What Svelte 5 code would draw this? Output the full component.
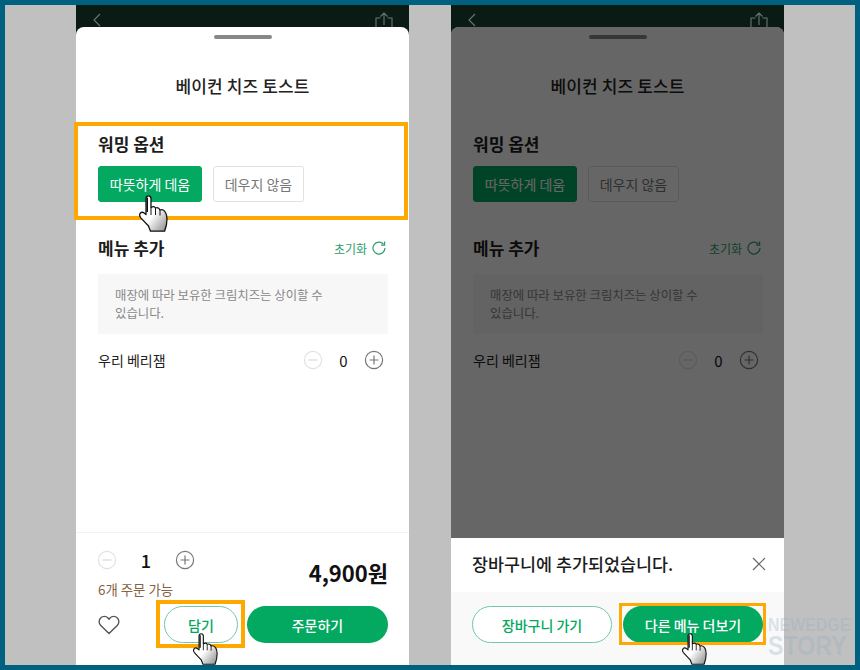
<script>
  const teal = 'teal';
</script>

{#snippet minus()}
  <svg class="circ" viewBox="0 0 20 20"><circle cx="10" cy="10" r="8.6" fill="none" stroke="#e2e2e2" stroke-width="1.2"/><path d="M5.5 10h9" stroke="#d8d8d8" stroke-width="1.2"/></svg>
{/snippet}
{#snippet plus()}
  <svg class="circ" viewBox="0 0 20 20"><circle cx="10" cy="10" r="8.6" fill="none" stroke="#777" stroke-width="1.2"/><path d="M5.5 10h9M10 5.5v9" stroke="#777" stroke-width="1.2"/></svg>
{/snippet}
{#snippet hand(cls)}
  <svg class="hand {cls}" viewBox="0 0 29 37">
    <defs><linearGradient id="hg-{cls}" x1="0.1" y1="0.25" x2="0.85" y2="1"><stop offset="0.45" stop-color="#fff"/><stop offset="1" stop-color="#9a9a9a"/></linearGradient></defs>
    <path d="M7 3.5Q7 .8 9.4 .8T12 3.5V12.5Q15 10.6 16.5 13Q19.5 11.8 21 15Q24.5 13.8 26.5 17.5Q28 20 28 24L27.4 30 25.6 36.2H11.5L9.5 31 1.6 22.6Q0 20.2 1 18.6 2.6 16.2 5.2 18L7 19.6Z" fill="url(#hg-{cls})" stroke="#111" stroke-width="1.3" stroke-linejoin="round"/>
    <path d="M12 12.5V20M16.5 13V20M21 15V20.5" stroke="#111" stroke-width="1" fill="none"/>
    <path d="M8.2 2.5V17" stroke="#111" stroke-width="1.6"/>
  </svg>
{/snippet}
{#snippet topbar()}
  <div class="topbar">
    <svg class="back" viewBox="0 0 8 14"><path d="M7 1 1 7l6 6" fill="none" stroke="#6e7672" stroke-width="1.1"/></svg>
    <svg class="share" viewBox="0 0 18 18"><path d="M5.5 6H1v12M12.5 6H17v12M9 13V1M5.5 4.5 9 1l3.5 3.5" fill="none" stroke="#6e7672" stroke-width="1.1"/></svg>
  </div>
{/snippet}
{#snippet content()}
  <div class="grip"></div>
  <h1>베이컨 치즈 토스트</h1>
  <div class="pad">
    <h2>워밍 옵션</h2>
    <div class="opts">
      <span class="opt on">따뜻하게 데움</span>
      <span class="opt">데우지 않음</span>
    </div>
    <div class="menuhead">
      <h2>메뉴 추가</h2>
      <span class="reset">초기화
        <svg viewBox="0 0 14 14"><path d="M11.6 3.2A6 6 0 1 0 13 7" fill="none" stroke="#2e9e6c" stroke-width="1.2"/><path d="M12.6 .6v3.6H9" fill="none" stroke="#2e9e6c" stroke-width="1.2"/></svg>
      </span>
    </div>
    <p class="info">매장에 따라 보유한 크림치즈는 상이할 수<br>있습니다.</p>
    <div class="row">
      <span>우리 베리잼</span>
      <div class="stepper small">
        {@render minus()}
        <b>0</b>
        {@render plus()}
      </div>
    </div>
  </div>
{/snippet}

<div class="frame">
  <section class="phone">
    {@render topbar()}
    <div class="sheet">
      {@render content()}
      <div class="foot">
        <div class="qty">
          <div>
            <div class="stepper big">
              {@render minus()}
              <b>1</b>
              {@render plus()}
            </div>
            <div class="avail">6개 주문 가능</div>
          </div>
          <div class="price">4,900원</div>
        </div>
        <div class="actions">
          <svg class="heart" viewBox="0 0 22 20"><path d="M11 18.6 2.8 10.4A5.2 5.2 0 0 1 2.6 3 5.1 5.1 0 0 1 10 3L11 4.2 12 3A5.1 5.1 0 0 1 19.4 3 5.2 5.2 0 0 1 19.2 10.4Z" fill="none" stroke="#555" stroke-width="1.4" stroke-linejoin="round"/></svg>
          <span class="btn ghost add">담기</span>
          <span class="btn solid order">주문하기</span>
        </div>
      </div>
    </div>
    <div class="mark m1"></div>
    <div class="mark m2"></div>
    {@render hand('h1')}
    {@render hand('h2')}
  </section>

  <section class="phone">
    {@render topbar()}
    <div class="sheet">
      {@render content()}
    </div>
    <div class="dim"></div>
    <div class="toast">
      <div class="toasthead">
        <strong>장바구니에 추가되었습니다.</strong>
        <svg class="close" viewBox="0 0 14 14"><path d="M1 1l12 12M13 1 1 13" stroke="#666" stroke-width="1.2"/></svg>
      </div>
      <div class="toastfoot">
        <span class="btn ghost wide">장바구니 가기</span>
        <span class="btn solid wide">다른 메뉴 더보기</span>
      </div>
    </div>
    <div class="mark m3"></div>
    {@render hand('h3')}
  </section>

  <div class="water"><span class="nw">NEWEDGE</span><span class="st">STORY</span></div>
</div>

<style>
  :global(body) { margin: 0; background: #c0c0c0; }
  .frame {
    box-sizing: border-box; width: 860px; height: 670px; border: 5px solid #00607f;
    background: #c0c0c0; display: flex; justify-content: center; gap: 42px;
    position: relative; overflow: hidden;
    font-family: "Noto Sans CJK KR", "Noto Sans", sans-serif; color: #222;
  }
  .phone { width: 333px; position: relative; display: flex; flex-direction: column; background: #0a1a14; }
  .topbar { height: 22px; display: flex; justify-content: space-between; padding: 8px 16px 0 17px; box-sizing: border-box; margin-bottom: 0; overflow: visible; }
  .back { width: 8px; height: 14px; margin-top: 0; }
  .share { width: 18px; height: 18px; margin-top: -1px; }
  .sheet { flex: 1; background: #fff; border-radius: 8px 8px 0 0; display: flex; flex-direction: column; position: relative; }
  .grip { width: 58px; height: 4px; border-radius: 2px; background: #888; margin: 8px auto 0; }
  h1 { font-size: 17px; font-weight: 500; letter-spacing: .1px; text-align: center; margin: 34px 0 0; line-height: 25px; }
  .pad { padding: 0 21px 0 22px; }
  h2 { font-size: 17px; font-weight: 700; margin: 0; line-height: 24px; color: #1c1c1c; }
  .pad > h2 { margin-top: 34px; }
  .opts { display: flex; gap: 11px; margin-top: 10px; }
  .opt { height: 36px; width: 91px; box-sizing: border-box; border: 1px solid #e2e2e2; border-radius: 3px; font-size: 14px; color: #777; display: flex; align-items: center; justify-content: center; }
  .opt.on { width: 104px; background: #03a960; border-color: #03a960; color: #fff; }
  .menuhead { display: flex; justify-content: space-between; align-items: center; margin-top: 34px; height: 24px; }
  .reset { font-size: 12px; color: #2e9e6c; display: flex; align-items: center; gap: 5px; padding-right: 2px; }
  .reset svg { width: 14px; height: 14px; }
  .info { margin: 14px 0 0; height: 60px; box-sizing: border-box; background: #f7f7f7; padding: 12px 17px; font-size: 12.4px; line-height: 18px; color: #888; }
  .row { display: flex; justify-content: space-between; align-items: center; margin-top: 14px; height: 24px; font-size: 14px; padding-right: 4px; }
  .stepper { display: flex; align-items: center; }
  .stepper b { font-weight: 400; color: #111; text-align: center; font-size: 15px; }
  .stepper.small b { width: 41px; }
  .circ { width: 20px; height: 20px; display: block; }
  .foot { margin-top: auto; border-top: 1px solid #f2f2f2; height: 133px; box-sizing: border-box; padding: 17px 21px 0 22px; }
  .qty { display: flex; justify-content: space-between; }
  .stepper.big { margin-left: -1px; height: 20px; }
  .stepper.big b { width: 58px; font-size: 18px; font-weight: 500; }
  .avail { font-size: 13.4px; color: #85633f; margin-top: 10px; line-height: 18px; }
  .price { font-size: 22px; font-weight: 700; color: #111; line-height: 30px; margin-top: 7px; }
  .actions { display: flex; align-items: center; margin-top: 8px; }
  .heart { width: 22px; height: 20px; }
  .btn { height: 37px; box-sizing: border-box; border-radius: 19px; font-size: 14px; font-weight: 500; display: flex; align-items: center; justify-content: center; }
  .ghost { background: #fff; border: 1px solid #72c8a5; color: #03a960; }
  .solid { background: #03a960; color: #fff; }
  .add { width: 74px; margin-left: 44px; }
  .order { width: 141px; margin-left: 9px; }
  .mark { position: absolute; box-sizing: border-box; border: 3px solid #ffa800; pointer-events: none; }
  .m1 { left: -2px; top: 117px; width: 334px; height: 98px; border-width: 4px; }
  .m2 { left: 80px; top: 595px; width: 89px; height: 48px; border-width: 4px; }
  .m3 { left: 168px; top: 598px; width: 147px; height: 42px; border-width: 3px; }
  .hand { position: absolute; width: 29px; height: 37px; }
  .h1 { left: 63px; top: 190px; }
  .h2 { left: 117px; top: 628px; width: 25px; height: 32px; }
  .h3 { left: 231px; top: 628px; width: 25px; height: 32px; }
  .dim { position: absolute; left: 0; right: 0; top: 22px; bottom: 127px; background: rgba(0,0,0,.6); border-radius: 8px 8px 0 0; }
  .toast { position: absolute; left: 0; right: 0; bottom: 0; height: 127px; background: #fff; display: flex; flex-direction: column; }
  .toasthead { height: 54px; display: flex; align-items: center; justify-content: space-between; padding: 0 18px 3px 21px; box-sizing: border-box; }
  .toasthead strong { font-size: 17.4px; font-weight: 500; color: #1c1c1c; }
  .close { width: 14px; height: 14px; }
  .toastfoot { flex: 1; background: #f9f9f9; display: flex; gap: 11px; padding: 14px 21px 0; }
  .wide { width: 140px; }
  .water { position: absolute; left: 763px; top: 611px; display: flex; flex-direction: column; align-items: flex-start; font-family: "Liberation Sans", sans-serif; font-weight: 700; color: rgba(150,175,190,.33); pointer-events: none; }
  .nw { font-size: 18px; line-height: 18px; transform: scaleX(.885); transform-origin: left center; }
  .st { font-size: 28px; line-height: 24px; transform: scaleX(.83); transform-origin: left center; }
</style>
